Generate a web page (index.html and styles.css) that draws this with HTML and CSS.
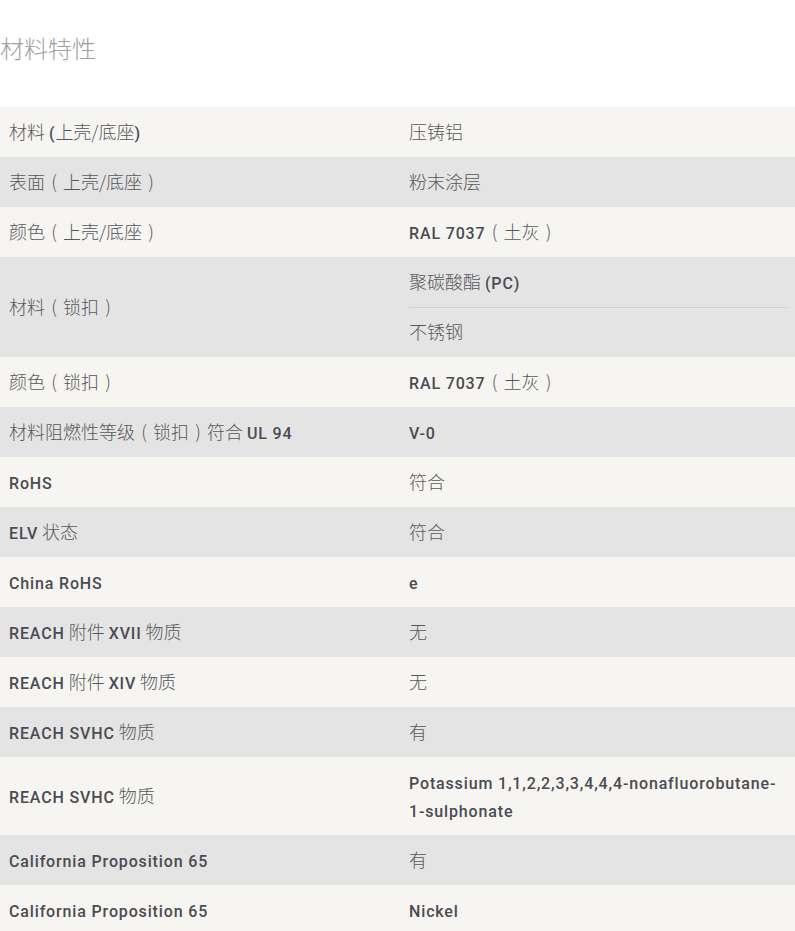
FILE: index.html
```html
<!DOCTYPE html>
<html lang="zh">
<head>
<meta charset="utf-8">
<title>材料特性</title>
<link rel="stylesheet" href="styles.css">
</head>
<body>
<h2 class="title">材料特性</h2>
<div class="table">
  <div class="row light"><div class="k">材料 <b>(</b>上壳/底座<b>)</b></div><div class="v">压铸铝</div></div>
  <div class="row gray"><div class="k">表面<span class="p">(</span>上壳/底座<span class="p">)</span></div><div class="v">粉末涂层</div></div>
  <div class="row light"><div class="k">颜色<span class="p">(</span>上壳/底座<span class="p">)</span></div><div class="v"><b>RAL 7037</b><span class="p">(</span>土灰<span class="p">)</span></div></div>
  <div class="row gray"><div class="k mid"><span>材料<span class="p">(</span>锁扣<span class="p">)</span></span></div><div class="v multi"><div class="sub">聚碳酸酯 <b>(PC)</b></div><div class="sub sep">不锈钢</div></div></div>
  <div class="row light"><div class="k">颜色<span class="p">(</span>锁扣<span class="p">)</span></div><div class="v"><b>RAL 7037</b><span class="p">(</span>土灰<span class="p">)</span></div></div>
  <div class="row gray"><div class="k">材料阻燃性等级<span class="p">(</span>锁扣<span class="p">)</span>符合 <b>UL 94</b></div><div class="v"><b>V-0</b></div></div>
  <div class="row light"><div class="k"><b>RoHS</b></div><div class="v">符合</div></div>
  <div class="row gray"><div class="k"><b>ELV</b> 状态</div><div class="v">符合</div></div>
  <div class="row light"><div class="k"><b>China RoHS</b></div><div class="v"><b>e</b></div></div>
  <div class="row gray"><div class="k"><b>REACH</b> 附件 <b>XVII</b> 物质</div><div class="v">无</div></div>
  <div class="row light"><div class="k"><b>REACH</b> 附件 <b>XIV</b> 物质</div><div class="v">无</div></div>
  <div class="row gray"><div class="k"><b>REACH SVHC</b> 物质</div><div class="v">有</div></div>
  <div class="row light"><div class="k mid"><span><b>REACH SVHC</b> 物质</span></div><div class="v"><b>Potassium 1,1,2,2,3,3,4,4,4-nonafluorobutane-1-sulphonate</b></div></div>
  <div class="row gray"><div class="k"><b>California Proposition 65</b></div><div class="v">有</div></div>
  <div class="row light"><div class="k"><b>California Proposition 65</b></div><div class="v"><b>Nickel</b></div></div>
</div>
</body>
</html>
```
FILE: styles.css
```css
html, body {
  margin: 0;
  padding: 0;
  background: #ffffff;
}
body {
  font-family: "Noto Sans CJK SC", sans-serif;
  color: #58585c;
}
.title {
  margin: 0;
  padding: 31px 0 32px;
  font-family: "Noto Sans CJK SC", sans-serif;
  font-weight: 300;
  font-size: 24px;
  line-height: 34px;
  color: #a0a0a0;
}
.table {
  display: flex;
  flex-direction: column;
  margin-top: 10px;
}
.row {
  display: grid;
  grid-template-columns: 400px 1fr;
}
.light { background: #f6f5f1; }
.gray { background: #e4e4e4; }
.k, .v {
  font-family: "Noto Sans CJK SC", sans-serif;
  font-weight: 300;
  font-size: 18px;
  line-height: 28px;
  padding: 10px 8px 12px 9px;
}
.k.mid {
  display: flex;
  align-items: center;
}
.v.multi { padding-top: 0; padding-bottom: 0; }
.sub { padding: 10px 0 12px; }
.sep { border-top: 1px solid #cfcfcf; padding-top: 9px; }
.p {
  display: inline-block;
  width: 1em;
  text-align: center;
}
b {
  font-family: "Roboto", sans-serif;
  font-weight: 500;
  font-size: 16px;
  line-height: 20px;
  letter-spacing: 0.85px;
  color: #4b4b52;
}
```
